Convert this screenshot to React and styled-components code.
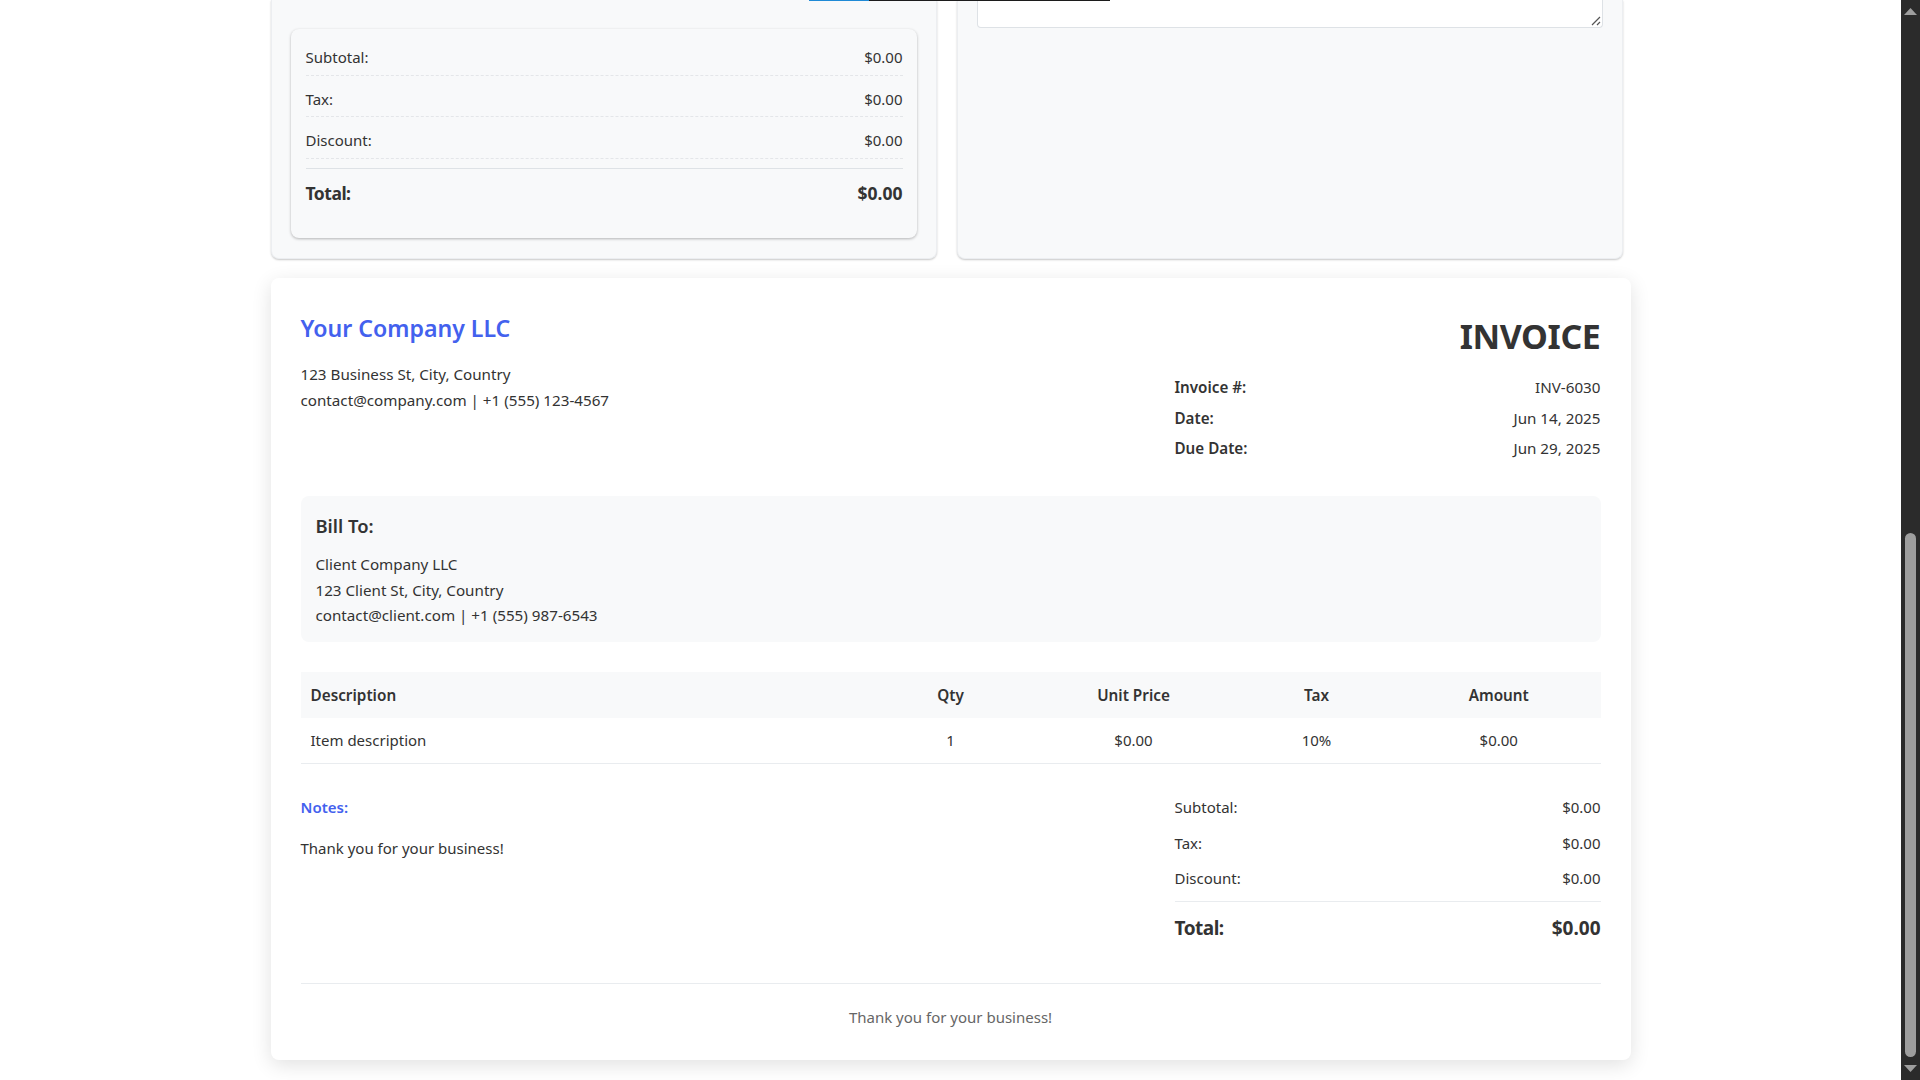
import React from "react";
import styled, { createGlobalStyle } from "styled-components";

const GlobalStyle = createGlobalStyle`
  html, body {
    margin: 0;
    height: 100%;
    overflow: hidden;
    background: #fff;
  }
  * {
    box-sizing: border-box;
  }
  body {
    font-family: "Noto Sans", "Open Sans", sans-serif;
    font-size: 15px;
    line-height: 25.6px;
    color: #333;
  }
`;

const Shell = styled.div`
  display: flex;
  height: 1080px;
  overflow: hidden;
`;

const Main = styled.main`
  position: relative;
  flex: 1;
  min-width: 0;
`;

const Page = styled.div`
  width: 1360px;
  margin: 0 auto;
`;

const TopGrid = styled.div`
  display: grid;
  grid-template-columns: 1fr 1fr;
  gap: 20px;
  width: 1352px;
  height: 258px;
`;

const Panel = styled.section`
  padding: 0 19px 20px;
  background: #f8f9fa;
  border: 1px solid #eceef1;
  border-top: 0;
  border-radius: 0 0 8px 8px;
  box-shadow: 0 1px 2px rgba(0, 0, 0, 0.22);
`;

// tail of the tab underline that sticks out at the very top of the viewport
const EdgeLine = styled.div`
  position: absolute;
  top: 0;
  left: 809px;
  z-index: 1;
  display: flex;
  height: 1px;
`;

const EdgeSegment = styled.span`
  width: ${(p) => p.$width}px;
  background: ${(p) => p.$color};
`;

const SummaryCard = styled.div`
  height: 209px;
  margin-top: 29px;
  padding: 12px 14px 12px 15px;
  background: #f8f9fa;
  border-radius: 8px;
  box-shadow: 0 1px 3px rgba(0, 0, 0, 0.28);
`;

const SummaryRow = styled.div`
  display: flex;
  justify-content: space-between;
  padding: 4px 0;
  margin-bottom: 7px;
  border-bottom: 1px dashed #e4e6e9;
`;

const SummaryTotal = styled.div`
  display: flex;
  justify-content: space-between;
  margin-top: 9.5px;
  padding-top: 9.5px;
  border-top: 1px solid #dee2e6;
  font-size: 17.5px;
  line-height: 28px;
  font-weight: 700;
`;

const TotalLabel = styled.span`
  letter-spacing: -0.5px;
`;

const TextareaTail = styled.div`
  position: relative;
  height: 28px;
  background: #fff;
  border: 1px solid #dee2e6;
  border-top: 0;
  border-radius: 0 0 4px 4px;
`;

const ResizeGrip = styled.svg`
  position: absolute;
  right: 1px;
  bottom: 1px;
  width: 10px;
  height: 10px;
`;

const Invoice = styled.article`
  height: 782px;
  margin-top: 20px;
  padding: 30px;
  background: #fff;
  border-radius: 8px;
  box-shadow: 0 5px 20px rgba(0, 0, 0, 0.12);
`;

const Header = styled.header`
  display: flex;
  justify-content: space-between;
  margin-bottom: 33px;
`;

const CompanyBlock = styled.div`
  padding-top: 1px;
`;

const CompanyName = styled.h1`
  margin: 0 0 15px;
  font-size: 23.1px;
  line-height: 38.4px;
  font-weight: 600;
  color: #4361ee;
`;

const InfoLine = styled.div`
  font-size: 15.2px;
  line-height: 25.6px;
`;

const MetaBlock = styled.div`
  width: 426px;
`;

const InvoiceTitle = styled.h2`
  margin: 0 0 6.5px;
  text-align: right;
  font-size: 34px;
  line-height: 57.6px;
  letter-spacing: -0.4px;
  font-weight: 700;
  color: #333;
`;

const MetaRow = styled.div`
  display: flex;
  justify-content: space-between;
  font-size: 15.2px;
  line-height: 30.4px;
`;

const MetaLabel = styled.span`
  font-weight: 600;
`;

const BillTo = styled.div`
  height: 146px;
  padding: 16px 15px 13px;
  background: #f8f9fa;
  border-radius: 8px;
`;

const BillToTitle = styled.h3`
  margin: 0 0 11px;
  font-size: 18.4px;
  line-height: 28.8px;
  font-weight: 600;
`;

const ItemsTable = styled.div`
  margin-top: 30px;
`;

const TableRow = styled.div`
  display: grid;
  grid-template-columns: 558.5px repeat(3, 183px) 1fr;
  align-items: center;
  height: ${(p) => (p.$head ? "45.7px" : "46.3px")};
  padding-top: ${(p) => (p.$head ? "1px" : "1px")};
  background: ${(p) => (p.$head ? "#f8f9fa" : "transparent")};
  border-bottom: ${(p) => (p.$head ? "0" : "1px solid #e9ecef")};
  font-size: ${(p) => (p.$head ? "15.3px" : "15px")};
  font-weight: ${(p) => (p.$head ? 600 : 400)};
`;

const Cell = styled.div`
  padding-left: ${(p) => (p.$first ? "10px" : "0")};
  padding-right: ${(p) => (p.$last ? "11px" : "0")};
  text-align: ${(p) => (p.$first ? "left" : "center")};
`;

const Bottom = styled.div`
  display: flex;
  justify-content: space-between;
  height: 192.5px;
  margin-top: 26px;
`;

const Notes = styled.div`
  padding-top: 5px;
`;

const NotesTitle = styled.div`
  margin-bottom: 15px;
  font-weight: 600;
  color: #4361ee;
`;

const Totals = styled.div`
  width: 426px;
`;

const TotalsRow = styled.div`
  display: flex;
  justify-content: space-between;
  padding: 5px 0;
`;

const GrandTotal = styled.div`
  display: flex;
  justify-content: space-between;
  margin-top: 3.5px;
  padding-top: 10px;
  border-top: 1px solid #e9ecef;
  font-size: 19px;
  line-height: 32px;
  font-weight: 700;
`;

const Footer = styled.footer`
  padding-top: 21px;
  border-top: 1px solid #e9ecef;
  text-align: center;
  color: #666;
`;

const Scrollbar = styled.aside`
  display: flex;
  flex-direction: column;
  align-items: center;
  width: 19px;
  padding-top: 8px;
  background: #2b2b2b;
`;

const ScrollArrow = styled.svg`
  flex: none;
  width: 13px;
  height: 7px;
  fill: #9e9e9e;
`;

const ScrollThumb = styled.div`
  width: 11px;
  height: 524px;
  margin: 518px 0 8px;
  background: #9e9e9e;
  border-radius: 6px;
`;

const summary = [
  ["Subtotal:", "$0.00"],
  ["Tax:", "$0.00"],
  ["Discount:", "$0.00"],
];

const meta = [
  ["Invoice #:", "INV-6030"],
  ["Date:", "Jun 14, 2025"],
  ["Due Date:", "Jun 29, 2025"],
];

export default function App() {
  return (
    <>
      <GlobalStyle />
      <Shell>
        <Main>
          <EdgeLine>
            <EdgeSegment $width={60} $color="#1f8ad6" />
            <EdgeSegment $width={241} $color="#1c1c1c" />
          </EdgeLine>
          <Page>
            <TopGrid>
              <Panel>
                <SummaryCard>
                  {summary.map(([label, value]) => (
                    <SummaryRow key={label}>
                      <span>{label}</span>
                      <span>{value}</span>
                    </SummaryRow>
                  ))}
                  <SummaryTotal>
                    <TotalLabel>Total:</TotalLabel>
                    <span>$0.00</span>
                  </SummaryTotal>
                </SummaryCard>
              </Panel>
              <Panel>
                <TextareaTail>
                  <ResizeGrip viewBox="0 0 10 10">
                    <path d="M1 9L9 1M6 9L9 6" stroke="#555" strokeWidth="1.2" fill="none" />
                  </ResizeGrip>
                </TextareaTail>
              </Panel>
            </TopGrid>

            <Invoice>
              <Header>
                <CompanyBlock>
                  <CompanyName>Your Company LLC</CompanyName>
                  <InfoLine>123 Business St, City, Country</InfoLine>
                  <InfoLine>contact@company.com | +1 (555) 123-4567</InfoLine>
                </CompanyBlock>
                <MetaBlock>
                  <InvoiceTitle>INVOICE</InvoiceTitle>
                  {meta.map(([label, value]) => (
                    <MetaRow key={label}>
                      <MetaLabel>{label}</MetaLabel>
                      <span>{value}</span>
                    </MetaRow>
                  ))}
                </MetaBlock>
              </Header>

              <BillTo>
                <BillToTitle>Bill To:</BillToTitle>
                <InfoLine>Client Company LLC</InfoLine>
                <InfoLine>123 Client St, City, Country</InfoLine>
                <InfoLine>contact@client.com | +1 (555) 987-6543</InfoLine>
              </BillTo>

              <ItemsTable>
                <TableRow $head>
                  <Cell $first>Description</Cell>
                  <Cell>Qty</Cell>
                  <Cell>Unit Price</Cell>
                  <Cell>Tax</Cell>
                  <Cell $last>Amount</Cell>
                </TableRow>
                <TableRow>
                  <Cell $first>Item description</Cell>
                  <Cell>1</Cell>
                  <Cell>$0.00</Cell>
                  <Cell>10%</Cell>
                  <Cell $last>$0.00</Cell>
                </TableRow>
              </ItemsTable>

              <Bottom>
                <Notes>
                  <NotesTitle>Notes:</NotesTitle>
                  <div>Thank you for your business!</div>
                </Notes>
                <Totals>
                  {summary.map(([label, value]) => (
                    <TotalsRow key={label}>
                      <span>{label}</span>
                      <span>{value}</span>
                    </TotalsRow>
                  ))}
                  <GrandTotal>
                    <TotalLabel>Total:</TotalLabel>
                    <span>$0.00</span>
                  </GrandTotal>
                </Totals>
              </Bottom>

              <Footer>Thank you for your business!</Footer>
            </Invoice>
          </Page>
        </Main>
        <Scrollbar>
          <ScrollArrow viewBox="0 0 13 7">
            <path d="M6.5 0L13 7H0z" />
          </ScrollArrow>
          <ScrollThumb />
          <ScrollArrow viewBox="0 0 13 7">
            <path d="M0 0H13L6.5 7z" />
          </ScrollArrow>
        </Scrollbar>
      </Shell>
    </>
  );
}
